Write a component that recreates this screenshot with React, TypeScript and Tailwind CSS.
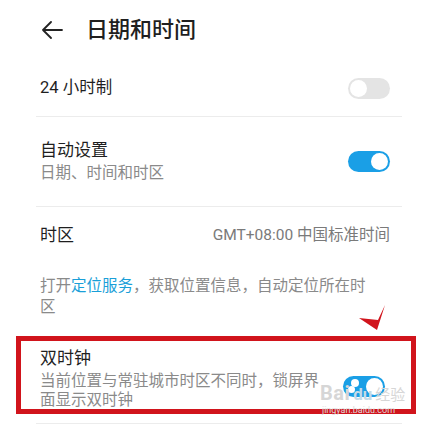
import React from 'react';

const Toggle: React.FC<{ on?: boolean }> = ({ on }) => (
  <div
    className={`flex h-[21px] w-[42px] shrink-0 items-center rounded-full p-[2px] ${
      on ? 'justify-end bg-[#1a9fe6]' : 'justify-start bg-[#e4e4e4]'
    }`}
  >
    <div className="h-[17px] w-[17px] rounded-full bg-white" />
  </div>
);

const Divider = () => <div className="mx-[36px] h-px bg-[#ececec]" />;

export default function App() {
  return (
    <div
      className="relative h-[428px] w-[438px] overflow-hidden bg-white text-[#1f1f1f]"
      style={{ fontFamily: "Roboto, 'Noto Sans CJK SC', sans-serif" }}
    >
      {/* header */}
      <div className="flex h-[60px] items-center pl-[41px]">
        <svg width="22" height="18" viewBox="0 0 22 18" fill="none" stroke="#222" strokeWidth="1.8">
          <path d="M21 9H2M10 1L2 9l8 8" strokeLinecap="round" strokeLinejoin="round" />
        </svg>
        <h1 className="ml-[23px] text-[22px] leading-none font-medium">日期和时间</h1>
      </div>

      {/* 24 hour */}
      <div className="flex h-[56px] items-center justify-between pr-[48px] pl-[40px]">
        <span className="text-[16.5px]">24 小时制</span>
        <Toggle />
      </div>
      <Divider />

      {/* auto */}
      <div className="flex h-[89px] items-center justify-between pr-[48px] pl-[40px]">
        <div className="pb-[2px]">
          <div className="text-[17px] leading-[24px]">自动设置</div>
          <div className="text-[15.5px] leading-[22px] text-[#8a8a8a]">日期、时间和时区</div>
        </div>
        <Toggle on />
      </div>
      <Divider />

      {/* time zone */}
      <div className="flex h-[57px] items-center justify-between pr-[48px] pl-[40px]">
        <span className="text-[17px]">时区</span>
        <span className="text-[15.5px] text-[#7a7a7a]">GMT+08:00 中国标准时间</span>
      </div>

      <p className="mt-[12px] w-[370px] pl-[40px] text-[15.5px] leading-[21px] text-[#8a8a8a]">
        打开<span className="text-[#1a9fd8]">定位服务</span>，获取位置信息，自动定位所在时区
      </p>

      {/* highlighted row */}
      <div className="mt-[18px] h-[78px] mx-[16px] w-[400px] border-[5px] border-[#d1141c] bg-white">
        <div className="flex items-center justify-between pr-[26px] pl-[19px]">
          <div className="pt-[5px]">
            <div className="text-[17px] leading-[24px]">双时钟</div>
            <div className="mt-[2px] w-[285px] text-[15.5px] leading-[19px] text-[#8a8a8a]">
              当前位置与常驻城市时区不同时，锁屏界面显示双时钟
            </div>
          </div>
          <div className="relative mt-[22px]">
            <Toggle on />
            <div className="absolute top-[3px] left-[8px] h-[8px] w-[8px] rounded-full bg-white" />
            <div className="absolute top-[10px] left-[5px] h-[7px] w-[7px] rounded-full bg-white" />
          </div>
        </div>
      </div>

      {/* red check mark */}
      <svg className="absolute top-[304px] left-[358px]" width="28" height="28" viewBox="0 0 28 28">
        <path d="M1 14 L19 26 L27 1 L20 16 Z" fill="#d1141c" />
      </svg>

      {/* watermark */}
      <div className="pointer-events-none absolute top-[383px] left-[320px] flex items-end gap-[3px] text-[#d6d6d6]">
        <span className="text-[20px] leading-none font-bold tracking-wide">Bai</span>
        <span className="text-[17px] leading-none font-bold text-[#c5dbe8]">du</span>
        <span className="text-[15px] leading-none">经验</span>
      </div>
      <div className="pointer-events-none absolute top-[404px] left-[322px] text-[9px] text-[#dcdcdc]">
        jingyan.baidu.com
      </div>

      <div className="absolute top-[423px] left-[36px] h-px w-[366px] bg-[#ececec]" />
    </div>
  );
}
